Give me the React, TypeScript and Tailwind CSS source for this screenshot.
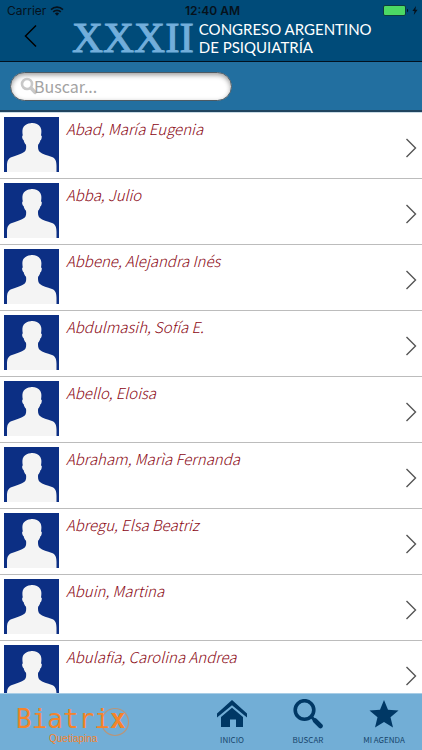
const attendees = [
  "Abad, María Eugenia",
  "Abba, Julio",
  "Abbene, Alejandra Inés",
  "Abdulmasih, Sofía E.",
  "Abello, Eloisa",
  "Abraham, Marìa Fernanda",
  "Abregu, Elsa Beatriz",
  "Abuin, Martina",
  "Abulafia, Carolina Andrea",
];

function StatusBar() {
  return (
    <div className="grid h-5 grid-cols-3 items-center pt-px pr-1 pl-[7px] font-['Inter','Liberation_Sans',sans-serif] text-[12px] leading-4 text-[#06121c]">
      <div className="flex items-center gap-1">
        <span>Carrier</span>
        <svg viewBox="0 0 14 10" className="h-[10px] w-[14px]" fill="none" stroke="currentColor" strokeWidth="1.6" aria-hidden="true">
          <path d="M1 3.6a8.6 8.6 0 0 1 12 0" />
          <path d="M3.2 5.9a5.4 5.4 0 0 1 7.6 0" />
          <path d="M7 9.8 4.9 7.6a3 3 0 0 1 4.2 0z" fill="currentColor" stroke="none" />
        </svg>
      </div>
      <span className="text-center font-semibold">12:40 AM</span>
      <div className="flex items-center justify-end gap-[3px]">
        <svg viewBox="0 0 26 11" className="h-[11px] w-[26px]" aria-hidden="true">
          <rect x="0.5" y="0.5" width="22" height="10" rx="1.5" fill="#4cd964" stroke="#0d3b3f" />
          <path d="M24 3.8c1.6.4 1.6 3 0 3.4z" fill="#06121c" />
        </svg>
        <svg viewBox="0 0 6 9" className="h-[9px] w-[6px]" fill="currentColor" aria-hidden="true">
          <path d="M4 0 .4 5.1h2.1L1.8 9l3.8-5.2H3.4z" />
        </svg>
      </div>
    </div>
  );
}

function Header() {
  return (
    <header className="border-b border-[#02111f] bg-[#004b79]">
      <StatusBar />
      <div className="flex h-[41px] items-start">
        <button type="button" aria-label="Volver" className="ml-[22px] flex h-8 w-4 items-center justify-center text-black">
          <svg viewBox="0 0 16 24" className="h-6 w-4" fill="none" stroke="currentColor" strokeWidth="1.5" aria-hidden="true">
            <path d="M14 1.5 3.5 12 14 22.5" />
          </svg>
        </button>
        <h1 className="ml-[34px] flex items-start gap-[5px]">
          <span className="font-['Liberation_Serif',serif] text-[43px] leading-[36px] text-[#72aedb] [-webkit-text-stroke:1px_#72aedb]">
            XXXII
          </span>
          <span className="font-['Lato',sans-serif] text-[15px] leading-[18px] whitespace-nowrap text-white">
            CONGRESO ARGENTINO
            <br />
            DE PSIQUIATRÍA
          </span>
        </h1>
      </div>
    </header>
  );
}

function SearchBar() {
  return (
    <form role="search" className="flex h-[50px] items-center border-b-2 border-[#20445f] bg-[#226fa0] pl-[10px]">
      <label className="flex h-[29px] w-[222px] items-center rounded-full border border-[#4d5a63] bg-white pl-[9px] shadow-[inset_0_2px_5px_rgba(0,0,0,0.4)]">
        <svg viewBox="0 0 18 18" className="h-[18px] w-[18px] shrink-0" fill="none" stroke="#c8c8c8" aria-hidden="true">
          <circle cx="7" cy="7" r="5" strokeWidth="2.6" />
          <path d="m11 11 4 4.4" strokeWidth="3.6" strokeLinecap="round" />
        </svg>
        <input
          type="text"
          aria-label="Buscar"
          placeholder="Buscar..."
          className="-ml-[4px] w-full min-w-0 bg-transparent font-['Noto_Sans_CJK_JP',sans-serif] text-[16px] leading-6 text-[#555] outline-none placeholder:text-[#a3a3a3]"
        />
      </label>
    </form>
  );
}

function Avatar() {
  return (
    <svg viewBox="0 0 55 55" className="h-[55px] w-[55px] shrink-0" aria-hidden="true">
      <rect width="55" height="55" fill="#0c2f84" />
      <path
        fill="#f4f4f4"
        d="M3 55V49c0-5 1-7.500 5-9 5-1.800 9.500-2.800 12.500-5.200 1.700-1.500 1.900-4.300 1.500-7-1.400-1.400-2-2.800-2.300-4.500-1.200-.6-1.900-3.600-1.400-4.300.1-.4.300-.5.500-.5-.5-3-.9-6.500 1-9C21.500 7.300 23.800 6.500 26.500 6.200c4-.5 8 .8 9.800 3.800 1.500 2.500 1.200 5.600.7 8.500.5 0 .8.200.8.700 0 1.600-.4 3.700-1.400 4.100-.4 1.700-1 3.100-2.300 4.500-.3 2.700 0 5.500 1.500 7 3 2.500 7.500 3.500 12.400 5.200 3.500 1.500 4.500 4 4.500 9v6z"
      />
    </svg>
  );
}

function AttendeeRow({ name }: { name: string }) {
  return (
    <li className="border-b border-[#bcbcbc]">
      <a href="#" className="flex h-[65px] items-start pt-1 pr-[5px] pl-1">
        <Avatar />
        <span className="ml-[7px] flex-1 font-['Noto_Sans_CJK_JP',sans-serif] text-[15px] leading-6 font-light text-[#8a0612] italic">
          {name}
        </span>
        <svg viewBox="0 0 12 20" className="mt-[21px] h-5 w-3" fill="none" stroke="#555" strokeWidth="1.4" aria-hidden="true">
          <path d="m1.500 1 9 9-9 9" />
        </svg>
      </a>
    </li>
  );
}

function SponsorLogo() {
  return (
    <a href="#" aria-label="Biatrix Quetiapina" className="relative ml-4 block h-[56px] w-[114px] text-[#f5842a]">
      <svg viewBox="0 0 30 30" className="absolute top-[13px] right-0 h-[30px] w-[30px]" fill="none" stroke="#b99579" aria-hidden="true">
        <circle cx="15" cy="15" r="13.500" strokeWidth="1.200" />
      </svg>
      <span className="absolute top-[11px] left-0 font-['DejaVu_Sans_Mono',monospace] text-[26px] leading-7">
        Biatri<b>x</b>
      </span>
      <span className="absolute top-[39px] left-[33px] font-['Liberation_Sans',sans-serif] text-[10px] leading-3">
        Quetiapina
      </span>
    </a>
  );
}

function TabBar() {
  const tab = "flex w-[76px] flex-col items-center gap-[3px] pt-[5px]";

  return (
    <footer className="flex h-[57px] shrink-0 justify-between border-t border-[#a8cde6] bg-[#72aed6]">
      <SponsorLogo />
      <nav
        aria-label="Principal"
        className="flex font-['Noto_Sans_CJK_JP',sans-serif] text-[8px] leading-4 text-[#17456c]"
      >
        <a href="#" className={tab}>
          <svg viewBox="0 0 30 30" className="h-[30px] w-[30px]" fill="#003865" aria-hidden="true">
            <path d="M0 14.500 15 1l15 13.500v4L15 6.200 0 18.500z" />
            <path d="M4 18 15 8.800 26 18v10h-7v-7.500h-6V28H4z" />
          </svg>
          INICIO
        </a>
        <a href="#" className={tab}>
          <svg viewBox="0 0 30 30" className="h-[30px] w-[30px]" fill="none" stroke="#003865" aria-hidden="true">
            <circle cx="11.500" cy="11" r="9.300" strokeWidth="3.600" />
            <path d="m18.500 18 3 3" strokeWidth="3" />
            <path d="m22 21.500 5.500 5.500" strokeWidth="4.600" strokeLinecap="round" />
          </svg>
          BUSCAR
        </a>
        <a href="#" className={tab}>
          <svg viewBox="0 0 30 30" className="h-[30px] w-[30px]" fill="#003865" aria-hidden="true">
            <path d="m15 1 4 9.700 10.500.8-8 6.800 2.500 10.200-9-5.500-9 5.500 2.500-10.200-8-6.800 10.500-.8z" />
          </svg>
          MI AGENDA
        </a>
      </nav>
    </footer>
  );
}

export default function App() {
  return (
    <div className="flex h-screen flex-col bg-white">
      <Header />
      <SearchBar />
      <main className="min-h-0 flex-1 overflow-hidden border-t border-[#c9dbe6]">
        <ul>
          {attendees.map((name) => (
            <AttendeeRow key={name} name={name} />
          ))}
        </ul>
      </main>
      <TabBar />
    </div>
  );
}
